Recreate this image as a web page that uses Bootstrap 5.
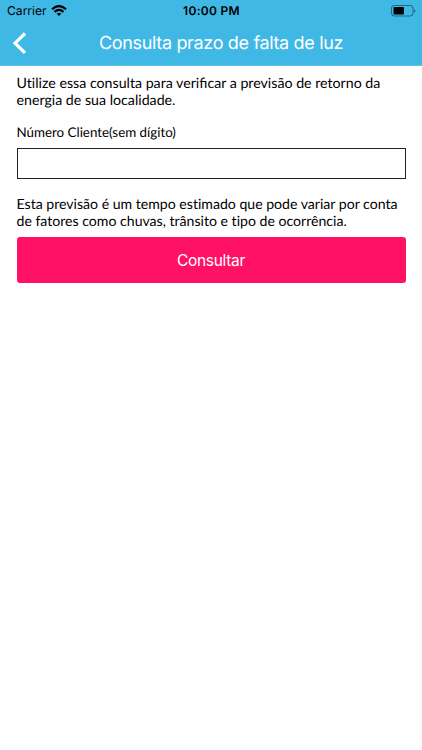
<!DOCTYPE html>
<html lang="pt-BR">
<head>
<meta charset="utf-8">
<meta name="viewport" content="width=device-width, initial-scale=1">
<title>Consulta prazo de falta de luz</title>
<link href="https://cdn.jsdelivr.net/npm/bootstrap@5.3.0/dist/css/bootstrap.min.css" rel="stylesheet">
<style>
body{font-family:Lato,sans-serif;font-size:14.1px;line-height:17px;color:#000;height:750px;overflow:hidden;font-variant-ligatures:none;text-rendering:geometricPrecision}
.app-top{background:#40b8e6;height:66px;border-bottom:1px solid #64c0e6}
.status-line{height:22px;font:12.1px/22px Inter,sans-serif;display:grid;grid-template-columns:1fr auto 1fr;padding:0 6px 0 7px}
.clock{font-weight:600;font-size:12px;letter-spacing:.3px}
.title-line{height:43px}
.btn.back{width:40px;padding:0 0 2px 12px;line-height:0;text-align:left}
.title-text{font:400 18px/42px Inter,sans-serif;letter-spacing:-.34px;color:#fff;margin:0;padding:1px 0 0 59px}
.page-body{padding:9px 16.5px 0}
.page-body p{margin:0;white-space:nowrap}
.page-body .intro{font-size:14.2px}
.field-label{font-size:13.35px;margin:14px 0 7px;line-height:18px}
.form-control.client-input{height:31px;border:1px solid #222;border-radius:0;margin-bottom:17px}
.btn.consult{background:#ff1166;color:#fff;height:46px;border:0;border-radius:3px;font:400 15.5px/46px Inter,sans-serif;letter-spacing:-.33px;padding:1px 0 0;margin-top:7px}
.lig{font-variant-ligatures:common-ligatures}
</style>
</head>
<body class="bg-white">
<header class="app-top">
<div class="status-line align-items-center">
<div class="d-flex align-items-center gap-1"><span>Carrier</span>
<svg width="16" height="12" viewBox="0 0 16 12" fill="none" stroke="#000" stroke-width="2.2"><path d="M1 4.2Q8-2 15 4.2M3.5 6.8Q8 2.9 12.5 6.8"/><path d="M5.7 8.7Q8 6.8 10.3 8.7L8 11.1Z" fill="#000" stroke="none"/></svg></div>
<span class="clock">10:00 PM</span>
<svg class="ms-auto" width="25" height="12" viewBox="0 0 25 12"><rect x=".5" y=".5" width="21.5" height="10.5" rx="2.7" fill="none" stroke="#000" stroke-opacity=".45"/><rect x="2.5" y="2" width="10.5" height="7.5" rx="1"/><path d="M23.3 4q2 2 0 4z" fill-opacity=".6"/></svg>
</div>
<div class="title-line d-flex align-items-center">
<button class="btn back border-0" aria-label="Voltar"><svg width="16" height="24" viewBox="0 0 16 24" fill="none" stroke="#fff" stroke-width="3.2"><path d="M13 2.5 3 12.2l10 9.7"/></svg></button>
<h1 class="title-text text-nowrap">Consulta prazo de falta de luz</h1>
</div>
</header>
<main class="page-body">
<p class="intro">Utilize essa consulta para veri<span class="lig">fi</span>car a previsão de retorno da<br>energia de sua localidade.</p>
<label class="field-label d-block" for="cliente">Número Cliente(sem dígito)</label>
<input class="form-control client-input" id="cliente" type="text">
<p>Esta previsão é um tempo estimado que pode variar por conta<br>de fatores como chuvas, trânsito e tipo de ocorrência.</p>
<button class="btn consult w-100">Consultar</button>
</main>
<script src="https://cdn.jsdelivr.net/npm/bootstrap@5.3.0/dist/js/bootstrap.bundle.min.js"></script>
</body>
</html>
